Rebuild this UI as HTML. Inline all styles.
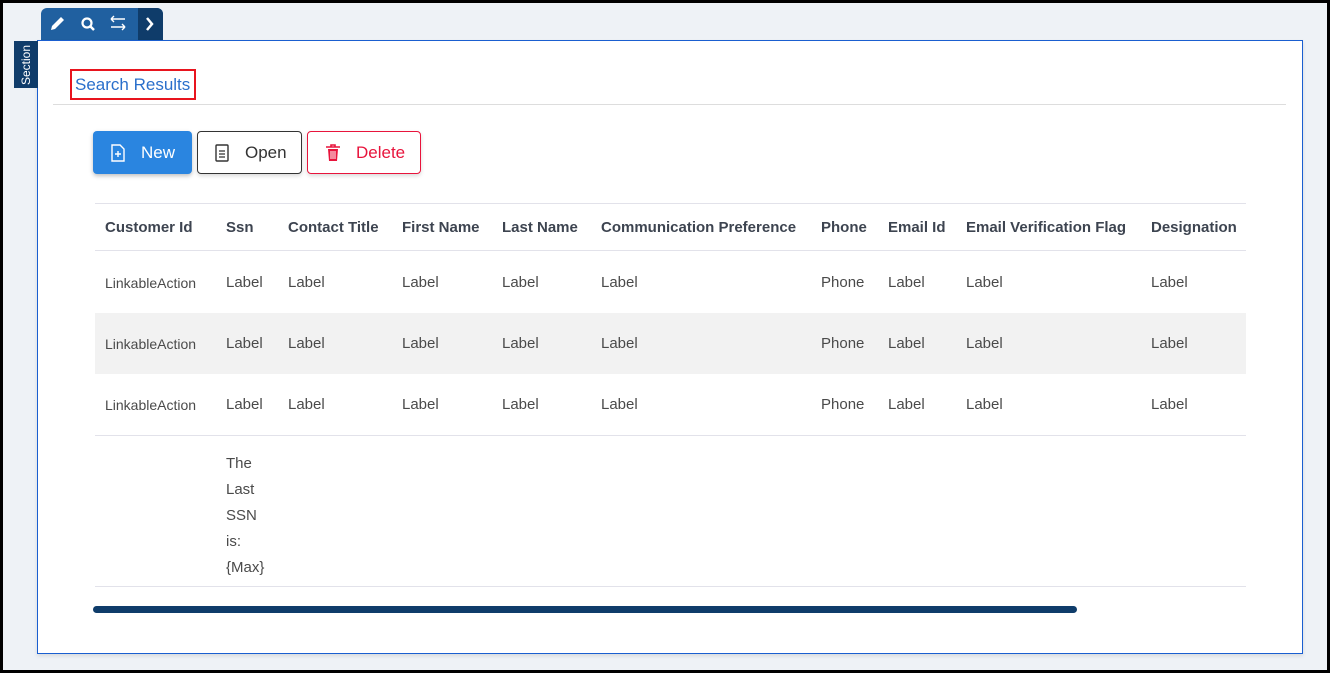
<!DOCTYPE html>
<html><head><style>
*{margin:0;padding:0;box-sizing:border-box}
html,body{width:1330px;height:673px;overflow:hidden}
body{background:#000;font-family:"Liberation Sans",sans-serif;position:relative}
.pg{position:absolute;left:3px;top:3px;width:1324px;height:667px;background:#eef2f6}
.a{position:absolute;white-space:nowrap}
.sec{position:absolute;left:37px;top:40px;width:1266px;height:614px;background:#fff;border:1px solid #1a5fd0;box-shadow:0 2px 4px rgba(0,0,0,.1)}
.h{font-weight:bold;font-size:15px;color:#3d4450;top:219px}
.c{font-size:15px;color:#4a4a4a}
.ln{position:absolute;left:95px;width:1151px;height:1px;background:#e2e2ea}
.btn{position:absolute;top:131px;height:43px;border-radius:4px;font-size:17px;display:flex;align-items:center}
</style></head><body>
<div class="pg"></div>
<div class="a" style="left:41px;top:8px;width:122px;height:32px;background:#2060a0;border-radius:6px 6px 0 0"></div>
<div class="a" style="left:138px;top:8px;width:25px;height:32px;background:#0f3c6a;border-radius:0 6px 0 0"></div>
<svg class="a" style="left:41px;top:8px" width="122" height="32" viewBox="0 0 122 32">
<path d="M10 22 L11 18 L20 9 L23 12 L14 21 Z" fill="#fff"/>
<circle cx="46" cy="15" r="4.5" fill="none" stroke="#fff" stroke-width="2.2"/><path d="M49 18 L53 22" stroke="#fff" stroke-width="2.5"/>
<path d="M70 11 L84 11 M70 11 L73 8 M70 11 L73 14 M70 19 L84 19 M84 19 L81 16 M84 19 L81 22" stroke="#fff" stroke-width="1.4" fill="none"/>
<path d="M106 10 L111 16 L106 22" stroke="#fff" stroke-width="2.5" fill="none"/>
</svg>
<div class="sec"></div>
<div class="a" style="left:14px;top:41px;width:24px;height:47px;background:#0f3c6a"></div>
<div class="a" style="left:14px;top:41px;width:24px;height:47px;color:#fff;font-size:12px;writing-mode:vertical-rl;transform:rotate(180deg);display:flex;align-items:center;justify-content:center">Section</div>
<div class="a" style="left:70px;top:69px;width:126px;height:31px;border:2px solid #e8141e"></div>
<div class="a" style="left:75px;top:75px;font-size:17px;color:#2a6fcb">Search Results</div>
<div class="a" style="left:53px;top:104px;width:1233px;height:1px;background:#ddd"></div>
<div class="btn" style="left:93px;width:99px;background:#2a85e0;color:#fff;box-shadow:0 2px 4px rgba(0,0,0,.25)">
<svg style="margin-left:17px" width="16" height="18"><path d="M2 1 H10 L14 5 V17 H2 Z" fill="none" stroke="#fff" stroke-width="1.4"/><path d="M8 7 V13 M5 10 H11" stroke="#fff" stroke-width="1.4"/></svg><span style="margin-left:15px">New</span></div>
<div class="btn" style="left:197px;width:105px;border:1px solid #333;color:#333;box-shadow:0 2px 4px rgba(0,0,0,.15)">
<svg style="margin-left:17px" width="14" height="18"><rect x="1" y="1" width="12" height="16" rx="1" fill="none" stroke="#333" stroke-width="1.4"/><path d="M4 7H10M4 10H10M4 13H10" stroke="#333" stroke-width="1.2"/></svg><span style="margin-left:16px">Open</span></div>
<div class="btn" style="left:307px;width:114px;border:1px solid #e8143c;color:#e8143c;box-shadow:0 2px 4px rgba(0,0,0,.15)">
<svg style="margin-left:17px" width="16" height="18"><path d="M1 3H15M6 3V1H10V3" stroke="#e8143c" stroke-width="1.6" fill="none"/><path d="M3 5H13L12 17H4Z" fill="#e8143c"/><path d="M6 7V15M8 7V15M10 7V15" stroke="#fff" stroke-width="1"/></svg><span style="margin-left:15px">Delete</span></div>
<div class="ln" style="top:203px"></div>
<div class="ln" style="top:250px"></div>
<div class="a" style="left:95px;top:313px;width:1151px;height:61px;background:#f2f2f2"></div>
<div class="ln" style="top:435px"></div>
<div class="ln" style="top:586px"></div>
<div class="a h" style="left:105px">Customer Id</div>
<div class="a h" style="left:226px">Ssn</div>
<div class="a h" style="left:288px">Contact Title</div>
<div class="a h" style="left:402px">First Name</div>
<div class="a h" style="left:502px">Last Name</div>
<div class="a h" style="left:601px">Communication Preference</div>
<div class="a h" style="left:821px">Phone</div>
<div class="a h" style="left:888px">Email Id</div>
<div class="a h" style="left:966px">Email Verification Flag</div>
<div class="a h" style="left:1151px">Designation</div>
<div id="rows"></div>
<script>
var xs=[105,226,288,402,502,601,821,888,966,1151],t=["LinkableAction","Label","Label","Label","Label","Label","Phone","Label","Label","Label"],h="";
[274,335,396].forEach(function(y){xs.forEach(function(x,i){h+='<div class="a c" style="left:'+x+'px;top:'+y+'px;'+(i==0?'font-size:14px;top:'+(y+1)+'px':'')+'">'+t[i]+'</div>'})});
document.getElementById('rows').innerHTML=h;
</script>
<div class="a c" style="left:226px;top:451px;line-height:26px;white-space:normal">The<br>Last<br>SSN<br>is:<br>{Max}</div>
<div class="a" style="left:93px;top:606px;width:984px;height:7px;background:#0f3c6a;border-radius:4px"></div>
</body></html>
